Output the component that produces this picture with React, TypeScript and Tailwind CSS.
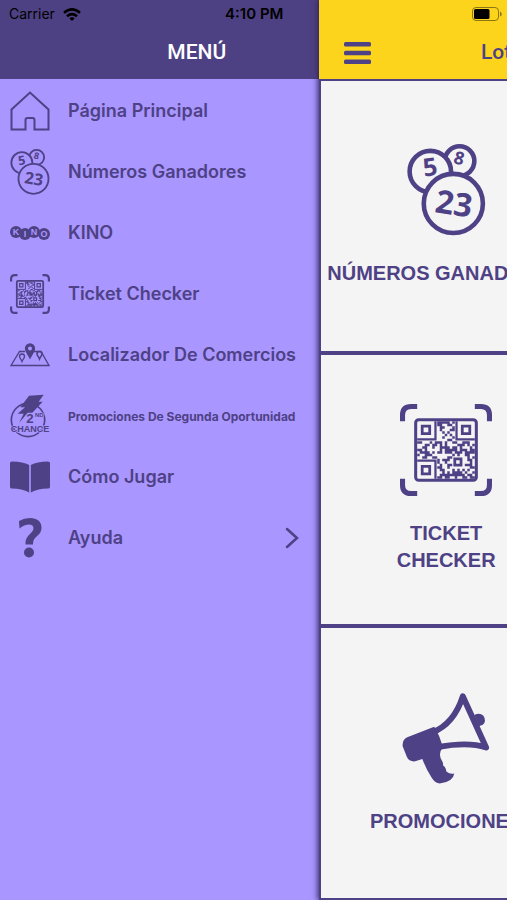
import type { ReactNode } from 'react'
import { clsx } from 'clsx'

interface IconProps {
  className?: string
}

function HomeIcon({ className }: IconProps) {
  return (
    <svg viewBox="0 0 40 40" fill="none" stroke="currentColor" strokeWidth="2" className={className}>
      <path d="M1.500 18.500 20 1.500l18.500 17V38.500H24.500V29q0-2-2-2h-5q-2 0-2 2v9.500H1.500z" />
    </svg>
  )
}

// Lottery balls: `fill` is the surface colour, so the front balls hide the back ones
function BallsIcon({ className, fill, thin }: IconProps & { fill: string; thin?: boolean }) {
  return (
    <svg
      viewBox="46 40 240 280"
      stroke="currentColor"
      fill={fill}
      strokeWidth={thin ? 11 : 14}
      className={className}
      aria-hidden="true"
    >
      <circle cx="206" cy="92" r="45" />
      <circle cx="117" cy="124" r="63" />
      <circle cx="187" cy="221" r="90" />
      <g fill="currentColor" stroke="none" fontFamily="'Open Sans', sans-serif" fontWeight="700" textAnchor="middle">
        <text x="116" y="137" fontSize="76" transform="rotate(-8 116 110)">5</text>
        <text x="205" y="102" fontSize="54" transform="rotate(14 205 83)">8</text>
        <text x="189" y="256" fontSize="98" transform="rotate(9 189 221)">23</text>
      </g>
    </svg>
  )
}

const SIZE = 23

function isReserved(x: number, y: number) {
  return (x < 8 && y < 8) || (x > 14 && y < 8) || (x < 8 && y > 14) || (x > 13 && x < 19 && y > 13 && y < 19)
}

const modules: string[] = []
for (let y = 0; y < SIZE; y++) {
  for (let x = 0; x < SIZE; x++) {
    const h = ((x * 73 + y * 151) ^ (x * y * 37 + 91)) % 101
    if (!isReserved(x, y) && (h < 46 || (x + y * 3) % 11 === 0)) modules.push(`M${x} ${y}h1v1h-1z`)
  }
}

function QrIcon({ className, thin }: IconProps & { thin?: boolean }) {
  return (
    <svg viewBox="0 0 91 91" fill="none" stroke="currentColor" className={className} aria-hidden="true">
      <path
        d="M2.500 17V11q0-8.500 8.500-8.500h6M74 2.500h6q8.500 0 8.500 8.500v6M88.500 74v6q0 8.500-8.500 8.500h-6M17 88.500h-6q-8.500 0-8.500-8.500v-6"
        strokeWidth="5"
      />
      <rect x="15.500" y="15.500" width="60" height="60" rx="3" strokeWidth={thin ? 4 : 3} />
      <g transform="translate(17 17) scale(2.478)">
        <path d={modules.join('')} fill="currentColor" stroke="none" />
        <path d="M0 7.300h7.300V0M15.700 0v7.300H23M0 15.700h7.300V23" strokeWidth=".9" />
        <path d="M2 2h3v3H2zM18 2h3v3h-3zM2 18h3v3H2zM15 15h2.500v2.500H15z" strokeWidth="1.100" />
      </g>
    </svg>
  )
}

function MegaphoneIcon({ className }: IconProps) {
  return (
    <svg viewBox="32 30 270 280" fill="none" stroke="currentColor" className={className} aria-hidden="true">
      <path d="M124 153C172 134 202 90 217 43L288 199C250 186 200 187 144 197" strokeWidth="18" strokeLinejoin="round" />
      <path
        d="M48 168 130 136Q148 164 156 200 140 218 154 240 158 246 157 254 165 258 167 272 178 281 191 278 188 302 150 308 134 310 122 290 104 262 94 234L72 241Q54 243 47 228L34 195Q32 176 48 168z"
        fill="currentColor"
        stroke="none"
      />
      <path d="M252 100Q268 92 280 102 290 118 278 130L266 134z" fill="currentColor" stroke="none" />
    </svg>
  )
}

function KinoIcon({ className }: IconProps) {
  const letters = [
    { char: 'K', x: 6, y: 7 },
    { char: 'I', x: 15, y: 9 },
    { char: 'N', x: 24, y: 7 },
    { char: 'O', x: 34, y: 9 },
  ]
  return (
    <svg viewBox="0 0 40 15" className={className} aria-hidden="true">
      {letters.map(({ char, x, y }) => (
        <g key={char}>
          <circle cx={x} cy={y} r="6" fill="currentColor" />
          <text
            x={x}
            y={y + 3}
            fontSize="9"
            fontWeight="700"
            textAnchor="middle"
            fill="#a996ff"
            fontFamily="'Liberation Sans', sans-serif"
          >
            {char}
          </text>
        </g>
      ))}
    </svg>
  )
}

function MapIcon({ className }: IconProps) {
  return (
    <svg viewBox="0 0 40 24" fill="none" stroke="currentColor" strokeWidth="1.300" className={className}>
      <path d="M15 8.500H9.500L1 22.500h38L31 8.500H24" />
      <path d="M20 15C18 11 15.500 8.500 15.500 5.500a4.500 4.500 0 0 1 9 0C24.500 8.500 22 11 20 15z" fill="currentColor" />
      <circle cx="20" cy="5.500" r="2" fill="#a996ff" stroke="none" />
      <path d="M29.500 16c-1-2.500-2.500-3.500-2.500-5a2.500 2.500 0 0 1 5 0c0 1.500-1.500 2.500-2.500 5z" strokeWidth="1.600" />
      <path d="M12 18.500c-1-2.500-2.500-3.500-2.500-5a2.500 2.500 0 0 1 5 0c0 1.500-1.500 2.500-2.500 5z" />
    </svg>
  )
}

function ChanceIcon({ className }: IconProps) {
  return (
    <svg viewBox="31 190 120 132" className={className} aria-hidden="true">
      <circle cx="85" cy="268" r="50" fill="none" stroke="currentColor" strokeWidth="5" />
      <path d="M88 195 132 192 117 213 129 213 98 246 84 246 58 277 72 249 54 249 76 230 62 230z" fill="currentColor" />
      <g
        fill="currentColor"
        stroke="#a996ff"
        strokeWidth="4"
        paintOrder="stroke"
        fontFamily="'Liberation Sans', sans-serif"
        fontWeight="700"
        textAnchor="middle"
      >
        <text x="91" y="276" fontSize="40">2</text>
        <text x="119" y="258" fontSize="18">ND</text>
        <text x="91" y="303" fontSize="27">CHANCE</text>
      </g>
    </svg>
  )
}

function BookIcon({ className }: IconProps) {
  return (
    <svg viewBox="0 0 40 32" fill="currentColor" className={className}>
      <path d="M0 2Q0 .5 2 .5 13 .5 19.200 4V31.500Q12 27.500 2 27.500 0 27.500 0 26zM40 2Q40 .5 38 .5 27 .5 20.800 4V31.500Q28 27.500 38 27.500 40 27.500 40 26z" />
    </svg>
  )
}

function QuestionIcon({ className }: IconProps) {
  return (
    <svg viewBox="0 0 24 40" fill="currentColor" className={className}>
      <path d="M1 3Q6 0 12 0C19 0 23.500 3.500 23.500 9.500 23.500 14.500 20.500 17 17.500 19.500 15.500 21.500 15 23 15 26.500H7.500C7.500 21.500 8.500 19.500 11.500 16.500 14 14 15.500 12.500 15.500 10 15.500 7.500 13.500 6.500 11 6.500 8 6.500 4.500 8 1.500 10.500z" />
      <circle cx="11" cy="34.500" r="5" />
    </svg>
  )
}

const menuItems: { label: string; icon: ReactNode; small?: boolean; arrow?: boolean }[] = [
  { label: 'Página Principal', icon: <HomeIcon className="size-10" /> },
  { label: 'Números Ganadores', icon: <BallsIcon className="h-12 w-10" fill="#a996ff" thin /> },
  { label: 'KINO', icon: <KinoIcon className="w-10" /> },
  { label: 'Ticket Checker', icon: <QrIcon className="size-10" thin /> },
  { label: 'Localizador De Comercios', icon: <MapIcon className="w-10" /> },
  { label: 'Promociones De Segunda Oportunidad', icon: <ChanceIcon className="w-10" />, small: true },
  { label: 'Cómo Jugar', icon: <BookIcon className="w-10" /> },
  { label: 'Ayuda', icon: <QuestionIcon className="h-10" />, arrow: true },
]

const tiles = [
  { label: 'NÚMEROS GANADORES', icon: <BallsIcon className="h-[92px]" fill="#f4f4f4" />, wide: true },
  { label: 'TICKET CHECKER', icon: <QrIcon className="h-[92px]" /> },
  { label: 'PROMOCIONES', icon: <MegaphoneIcon className="h-[92px]" />, wide: true },
]

function Drawer() {
  return (
    <aside className="flex w-[63%] shrink-0 flex-col bg-[#a996ff] text-[#4e4185]">
      <header className="flex h-[79px] flex-col bg-[#4e4183]">
        <div className="flex h-7 items-center pl-[9px] pr-9 text-sm text-black">
          <span>Carrier</span>
          <svg viewBox="0 0 18 13" fill="none" stroke="currentColor" strokeWidth="2.600" className="ml-2 w-[18px]">
            <path d="M1 4.800Q9-2 17 4.800M4 8.200q5-4 10 0" />
            <path d="M6.300 10.300Q9 8.200 11.700 10.300L9 13z" fill="currentColor" stroke="none" />
          </svg>
          <span className="ml-auto text-[15px] font-semibold">4:10 PM</span>
        </div>
        <h1 className="flex flex-1 items-center justify-center pb-0.5 pl-[74px] font-[Roboto,sans-serif] text-[21px] font-medium text-white">
          MENÚ
        </h1>
      </header>
      <nav className="pt-px">
        <ul>
          {menuItems.map((item) => (
            <li key={item.label}>
              <a href="#" className="flex h-[61px] items-center pl-2.5 pr-3">
                <span className="flex w-10 shrink-0 justify-center">{item.icon}</span>
                <span
                  className={clsx(
                    'ml-[18px] whitespace-nowrap',
                    item.small ? 'pt-0.5 text-[12px] font-bold' : 'text-[18px] font-semibold',
                  )}
                >
                  {item.label}
                </span>
                {item.arrow && (
                  <svg
                    viewBox="0 0 14 22"
                    fill="none"
                    stroke="currentColor"
                    strokeWidth="2.500"
                    strokeLinecap="round"
                    className="ml-auto mr-2 h-[22px]"
                  >
                    <path d="m2 2 10 9-10 9" />
                  </svg>
                )}
              </a>
            </li>
          ))}
        </ul>
      </nav>
    </aside>
  )
}

function HomeScreen() {
  return (
    <main className="flex w-full shrink-0 flex-col bg-[#4e4185] text-[#4e4185] shadow-[0_0_6px_1px_#2c2358]">
      <header className="flex h-[79px] flex-col bg-[#fcd41c]">
        <div className="flex h-7 items-center">
          <svg viewBox="0 0 30 14" className="ml-[30%] w-[30px]" aria-hidden="true">
            <rect x=".5" y=".5" width="26" height="13" rx="3.500" fill="none" stroke="#8d7614" />
            <rect x="2" y="2" width="15.500" height="10" rx="1.500" fill="#000" />
            <path d="M28 4.500q1.800 1 1.800 2.500T28 9.500z" fill="#8d7614" />
          </svg>
        </div>
        <div className="flex flex-1 items-center pb-0.5">
          <button type="button" aria-label="Menú" className="ml-[25px]">
            <svg viewBox="0 0 27 22" className="w-[27px]" fill="currentColor">
              <rect width="27" height="4.500" rx="1.500" />
              <rect y="8.750" width="27" height="4.500" rx="1.500" />
              <rect y="17.500" width="27" height="4.500" rx="1.500" />
            </svg>
          </button>
          <h2 className="flex-1 pr-15 text-center font-[Roboto,sans-serif] text-[21px] font-medium">
            Lotería Electrónica
          </h2>
        </div>
      </header>
      <div className="grid w-1/2 flex-1 grid-rows-3 gap-1 pb-0.5 pl-0.5 pr-0.5 pt-0.5">
        {tiles.map((tile) => (
          <a
            key={tile.label}
            href="#"
            className="flex flex-col items-center justify-center gap-6 bg-[#f4f4f4] text-center font-['Liberation_Sans',Arial,sans-serif] text-[20px] font-bold leading-[27px]"
          >
            {tile.icon}
            <span className={tile.wide ? 'whitespace-nowrap' : 'w-min'}>{tile.label}</span>
          </a>
        ))}
      </div>
    </main>
  )
}

export default function App() {
  return (
    <div className="flex min-h-screen overflow-hidden font-[Inter,sans-serif]">
      <Drawer />
      <HomeScreen />
    </div>
  )
}
